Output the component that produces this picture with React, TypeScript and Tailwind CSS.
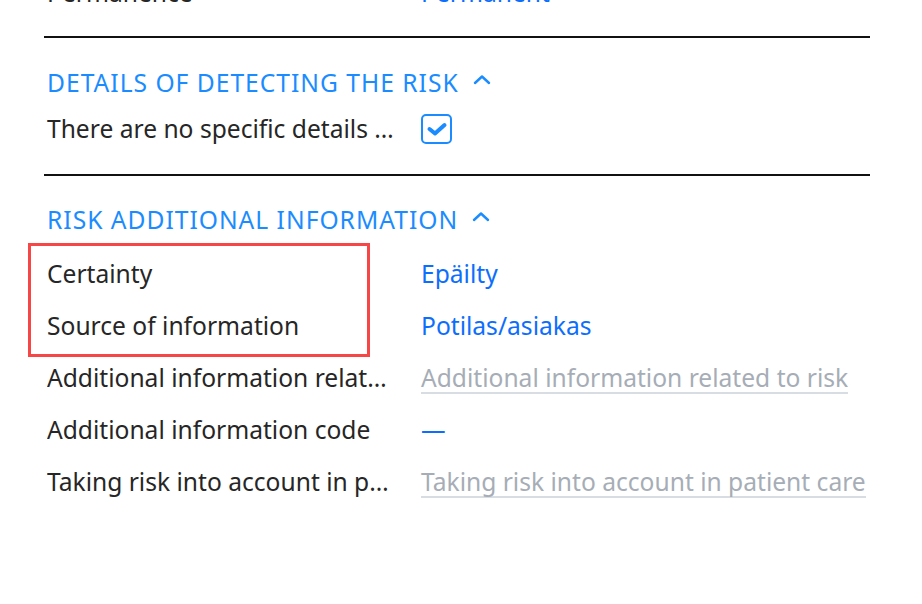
import { useState } from "react";

type Row = {
  label: string;
  value?: string;
  placeholder?: string;
  dash?: boolean;
};

const rows: Row[] = [
  { label: "Certainty", value: "Epäilty" },
  { label: "Source of information", value: "Potilas/asiakas" },
  { label: "Additional information related to risk", placeholder: "Additional information related to risk" },
  { label: "Additional information code", dash: true },
  { label: "Taking risk into account in patient care", placeholder: "Taking risk into account in patient care" },
];

function ChevronUp() {
  return (
    <svg width="18" height="12" viewBox="0 0 18 12" className="ml-[14px] mt-[-6px]">
      <path d="M2 9 L9 2.5 L16 9" fill="none" stroke="#1a8cff" strokeWidth="2.4" strokeLinecap="round" strokeLinejoin="round" />
    </svg>
  );
}

function Checkbox({ checked, onToggle }: { checked: boolean; onToggle: () => void }) {
  return (
    <button
      type="button"
      onClick={onToggle}
      className="flex h-[30px] w-[31px] items-center justify-center rounded-[5px] border-2 border-[#1a8cff] bg-white"
    >
      {checked && (
        <svg width="22" height="16" viewBox="0 0 22 16">
          <path d="M3.5 8 L9 12.5 L18.5 4" fill="none" stroke="#1a8cff" strokeWidth="4" strokeLinecap="round" strokeLinejoin="round" />
        </svg>
      )}
    </button>
  );
}

function Label({ children }: { children: string }) {
  return <div className="w-[356px] shrink-0 truncate pr-[4px] leading-[32px] text-[#262626]">{children}</div>;
}

export default function App() {
  const [noDetails, setNoDetails] = useState(true);

  return (
    <div
      className="h-[604px] w-[922px] overflow-hidden bg-white text-[24.6px] leading-none"
      style={{ fontFamily: '"Noto Sans", "Open Sans", sans-serif' }}
    >
      <div className="mx-[44px] mt-[-33px] w-[826px]">
        <div className="flex h-[52px] items-center px-[3px]">
          <Label>Permanence</Label>
          <div className="pl-[18px] text-[#0d6efd]">Permanent</div>
        </div>
        <div className="mt-[17px] h-[2px] bg-[#111]" />

        <section className="pt-[25px] pb-[19px]">
          <div className="flex h-[40px] items-center px-[3px] tracking-[1px] text-[#1a8cff]">
            DETAILS OF DETECTING THE RISK
            <ChevronUp />
          </div>
          <div className="flex h-[52px] items-center px-[3px]">
            <Label>There are no specific details about detecting the risk</Label>
            <div className="pl-[18px]">
              <Checkbox checked={noDetails} onToggle={() => setNoDetails(!noDetails)} />
            </div>
          </div>
        </section>
        <div className="h-[2px] bg-[#111]" />

        <section className="relative pt-[24px]">
          <div className="flex h-[40px] items-center px-[3px] tracking-[1px] text-[#1a8cff]">
            RISK ADDITIONAL INFORMATION
            <ChevronUp />
          </div>
          <div className="pt-[8px]">
            {rows.map((r) => (
              <div key={r.label} className="flex h-[52px] items-center px-[3px]">
                <Label>{r.label}</Label>
                <div className="pl-[18px]">
                  {r.value && <span className="text-[#0d6efd]">{r.value}</span>}
                  {r.dash && <span className="text-[#0d6efd]">—</span>}
                  {r.placeholder && (
                    <span className="inline-block border-b-2 border-[#d8dde3] pt-[2px] leading-[28px] text-[#a6adb6]">
                      {r.placeholder}
                    </span>
                  )}
                </div>
              </div>
            ))}
          </div>
          {/* highlight box */}
          <div className="pointer-events-none absolute left-[-16px] top-[67px] h-[114px] w-[342px] border-[3px] border-[#f64646]" />
        </section>
      </div>
    </div>
  );
}
